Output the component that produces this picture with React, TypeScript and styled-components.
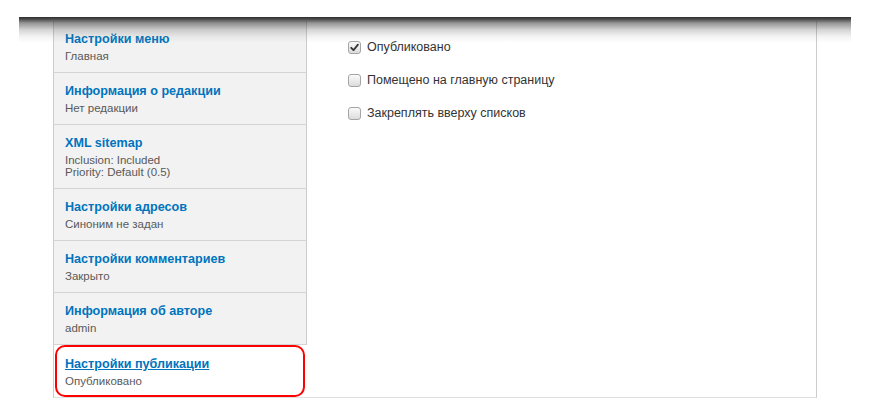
import React from "react";
import styled, { createGlobalStyle } from "styled-components";

const Global = createGlobalStyle`
  html, body { margin: 0; padding: 0; background: #fff; }
  body { font-family: "Liberation Sans", Arial, sans-serif; width: 869px; height: 411px; overflow: hidden; }
`;

const Page = styled.div`
  position: relative;
  width: 869px;
  height: 411px;
  padding: 21px 0 0 53px;
  box-sizing: border-box;
`;

const Shadow = styled.div`
  position: absolute;
  left: 19px;
  top: 17px;
  width: 832px;
  height: 26px;
  background: linear-gradient(
    to bottom,
    rgba(40, 40, 40, 0.97) 0px,
    rgba(40, 40, 40, 0.85) 2px,
    rgba(60, 60, 60, 0.55) 6px,
    rgba(90, 90, 90, 0.25) 13px,
    rgba(120, 120, 120, 0.08) 20px,
    rgba(255, 255, 255, 0) 26px
  );
  pointer-events: none;
`;

const Frame = styled.div`
  display: flex;
  width: 764px;
  height: 377px;
  box-sizing: border-box;
  border-left: 1px solid #ccc;
  border-right: 1px solid #ccc;
  border-bottom: 1px solid #e0e0e0;
`;

const Menu = styled.ul`
  list-style: none;
  margin: 0;
  padding: 0;
  width: 252px;
  flex: none;
  background: #f2f2f2;
  border-right: 1px solid #ccc;
  display: flex;
  flex-direction: column;
`;

const Item = styled.li<{ $selected?: boolean }>`
  position: relative;
  padding: 9px 10px 10px 11px;
  border-bottom: ${(p) => (p.$selected ? "0" : "1px solid #d4d4d4")};
  background: ${(p) => (p.$selected ? "#fff" : "transparent")};
  margin-right: ${(p) => (p.$selected ? "-1px" : "0")};
  flex: ${(p) => (p.$selected ? "1" : "none")};
  ${(p) =>
    p.$selected
      ? `padding-top: 10px;
  &::after {
    content: "";
    position: absolute;
    left: 1px;
    right: 2px;
    top: 0;
    bottom: 0;
    border: 2px solid #f00;
    border-radius: 10px;
  }`
      : ""}
`;

const Title = styled.a<{ $selected?: boolean }>`
  display: block;
  font-size: 12.6px;
  font-weight: bold;
  line-height: 18px;
  color: #0074bd;
  text-decoration: ${(p) => (p.$selected ? "underline" : "none")};
`;

const Summary = styled.div`
  margin-top: 2px;
  font-size: 11.5px;
  line-height: 12px;
  color: #595959;
`;

const Pane = styled.div`
  flex: 1;
  background: #fff;
  padding: 19px 0 0 41px;
  display: flex;
  flex-direction: column;
  gap: 18px;
`;

const Option = styled.label`
  display: flex;
  align-items: center;
  gap: 6px;
  font-size: 12.5px;
  line-height: 15px;
  color: #333;
`;

const Box = styled.span`
  width: 11px;
  height: 11px;
  border: 1px solid #a5a5a5;
  border-radius: 3px;
  background: linear-gradient(#fafafa, #dcdcdc);
  display: inline-flex;
  align-items: center;
  justify-content: center;
  flex: none;
`;

const items = [
  { title: "Настройки меню", summary: ["Главная"] },
  { title: "Информация о редакции", summary: ["Нет редакции"] },
  { title: "XML sitemap", summary: ["Inclusion: Included", "Priority: Default (0.5)"] },
  { title: "Настройки адресов", summary: ["Синоним не задан"] },
  { title: "Настройки комментариев", summary: ["Закрыто"] },
  { title: "Информация об авторе", summary: ["admin"] },
  { title: "Настройки публикации", summary: ["Опубликовано"], selected: true },
];

const options = [
  { label: "Опубликовано", checked: true },
  { label: "Помещено на главную страницу", checked: false },
  { label: "Закреплять вверху списков", checked: false },
];

export default function App() {
  return (
    <Page>
      <Global />
      <Frame>
        <Menu>
          {items.map((it) => (
            <Item key={it.title} $selected={it.selected}>
              <Title href="#" $selected={it.selected}>{it.title}</Title>
              <Summary>
                {it.summary.map((s) => (
                  <div key={s}>{s}</div>
                ))}
              </Summary>
            </Item>
          ))}
        </Menu>
        <Pane>
          {options.map((o) => (
            <Option key={o.label}>
              <Box>
                {o.checked && (
                  <svg width="9" height="9" viewBox="0 0 9 9">
                    <path d="M1.2 4.8 L3.5 7.2 L7.9 1.6" fill="none" stroke="#333" strokeWidth="1.8" strokeLinecap="round" strokeLinejoin="round" />
                  </svg>
                )}
              </Box>
              {o.label}
            </Option>
          ))}
        </Pane>
      </Frame>
      <Shadow />
    </Page>
  );
}
